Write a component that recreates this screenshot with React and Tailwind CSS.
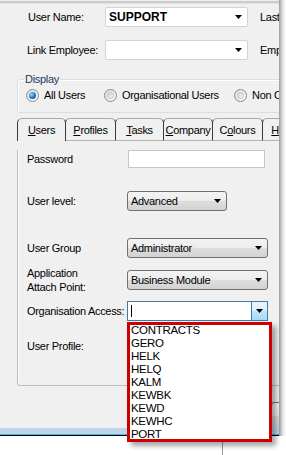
import React from 'react'

const font = "font-['Liberation_Sans',Arial,sans-serif]"

function Arrow() {
  return (
    <svg width="7" height="4" viewBox="0 0 7 4" className="shrink-0">
      <path d="M0 0h7L3.5 4z" fill="#000" />
    </svg>
  )
}

// white editable combo (top of dialog)
function EditCombo({ value, bold }) {
  return (
    <div className="flex h-[20px] w-[143px] shrink-0 items-center justify-between rounded-[2px] border border-[#d3d3d3] bg-white pl-[3px] pr-[5px]">
      <span className={bold ? 'text-[12px] font-bold tracking-normal' : ''}>{value}</span>
      <Arrow />
    </div>
  )
}

// win7 dropdown list look
function DropList({ value, w }) {
  return (
    <div className={`flex h-[20px] ${w} shrink-0 items-center justify-between rounded-[3px] border border-[#707070] bg-[linear-gradient(#f3f3f3,#ececec_50%,#dedede_50%,#d2d2d2)] pl-[3px] pr-[5px]`}>
      <span>{value}</span>
      <Arrow />
    </div>
  )
}

function Radio({ label, checked, w }) {
  return (
    <div className={`flex ${w} shrink-0 items-center gap-[5px]`}>
      <span className="flex h-[13px] w-[13px] items-center justify-center rounded-full border border-[#8a8a8a] bg-[linear-gradient(135deg,#dcdcdc,#fbfbfb)]">
        {checked ? (
          <span className="h-[7px] w-[7px] rounded-full bg-[radial-gradient(circle_at_35%_35%,#9ad8ff,#1d72c4_55%,#0c4786)]" />
        ) : (
          <span className="h-[7px] w-[7px] rounded-full border border-[#c4c4c4] bg-[linear-gradient(135deg,#d2d2d2,#f6f6f6)]" />
        )}
      </span>
      <span>{label}</span>
    </div>
  )
}

function Tab({ children, active, w, first }) {
  return (
    <div
      className={`flex h-[23px] ${w} shrink-0 items-center justify-center rounded-t-[5px] border-x border-t border-x-[#3a3a3a] border-t-[#a8a8a8] ${first ? '' : '-ml-px'} ${active ? 'relative z-10 bg-[#f0f0f0] pb-px' : 'border-b border-b-[#b4b4b4]'}`}
    >
      {children}
    </div>
  )
}

const items = ['CONTRACTS', 'GERO', 'HELK', 'HELQ', 'KALM', 'KEWBK', 'KEWD', 'KEWHC', 'PORT']

export default function App() {
  return (
    <div className={`relative h-[455px] w-[286px] overflow-hidden bg-white text-[11px] leading-[14px] tracking-[-0.3px] text-black ${font}`}>
      <div className="flex">
        {/* dialog window */}
        <div className="w-[279px] shrink-0">
          <div className="h-[4px] bg-[linear-gradient(#ffffff,#bdbdbd_50%,#f0f0f0)]" />
          <div className="h-[424px] overflow-hidden whitespace-nowrap bg-[#f0f0f0]">
            <div className="mt-[3px] flex h-[20px] items-center">
              <span className="w-[105px] shrink-0 pl-[28px]">User Name:</span>
              <EditCombo value="SUPPORT" bold />
              <span className="ml-[12px]">Last</span>
            </div>
            <div className="mt-[13px] flex h-[20px] items-center">
              <span className="w-[105px] shrink-0 pl-[27px]">Link Employee:</span>
              <EditCombo value="" />
              <span className="ml-[12px]">Emp</span>
            </div>

            {/* Display group */}
            <div className="ml-[17px] mt-[19px] h-[34px] w-[300px] rounded-[3px] border border-[#d5dfe5] shadow-[inset_1px_1px_0_#fff]">
              <span className="-mt-[8px] ml-[6px] block w-fit bg-[#f0f0f0] px-px text-[#1e395b]">Display</span>
              <div className="ml-[8px] mt-[2px] flex h-[14px] items-center">
                <Radio label="All Users" checked w="w-[78px]" />
                <Radio label="Organisational Users" w="w-[130px]" />
                <Radio label="Non Organisational Users" w="w-[160px]" />
              </div>
            </div>

            {/* tabs */}
            <div className="ml-[17px] mt-[5px] flex items-end">
              <Tab active first w="w-[49px]"><span><span className="underline">U</span>sers</span></Tab>
              <Tab w="w-[51px]"><span><span className="underline">P</span>rofiles</span></Tab>
              <Tab w="w-[49px]"><span><span className="underline">T</span>asks</span></Tab>
              <Tab w="w-[50px]"><span><span className="underline">C</span>ompany</span></Tab>
              <Tab w="w-[51px]"><span>C<span className="underline">o</span>lours</span></Tab>
              <Tab w="w-[40px]"><span><span className="underline">H</span>elp</span></Tab>
            </div>

            {/* tab page */}
            <div className="ml-[17px] h-[236px] w-[275px] rounded-bl-[3px] border-x border-b border-[#bcbcbc] pl-[9px] shadow-[inset_1px_0_0_#fff]">
              <div className="mt-[9px] flex h-[18px] items-center">
                <span className="w-[101px] shrink-0">Password</span>
                <div className="h-[18px] w-[137px] shrink-0 border border-[#c6c6c6] bg-white" />
              </div>
              <div className="mt-[23px] flex h-[20px] items-center">
                <span className="w-[100px] shrink-0">User level:</span>
                <DropList value="Advanced" w="w-[100px]" />
              </div>
              <div className="mt-[27px] flex h-[20px] items-center">
                <span className="w-[100px] shrink-0">User Group</span>
                <DropList value="Administrator" w="w-[141px]" />
              </div>
              <div className="mt-[12px] flex h-[20px] items-center">
                <span className="w-[100px] shrink-0">Application<br />Attach Point:</span>
                <DropList value="Business Module" w="w-[141px]" />
              </div>
              <div className="mt-[11px] flex h-[20px] items-center">
                <span className="w-[100px] shrink-0">Organisation Access:</span>
                <div className="flex h-[20px] w-[141px] shrink-0 items-center justify-between border border-[#3d7bad] bg-white pl-[3px]">
                  <span className="h-[12px] w-px bg-black" />
                  <span className="flex h-full w-[16px] items-center justify-center border-l border-[#3c7fb1] bg-[linear-gradient(#eaf6fd,#d9f0fc_50%,#bee6fd_50%,#a7d9f5)]">
                    <Arrow />
                  </span>
                </div>
              </div>
              <div className="mt-[15px] flex h-[20px] items-center">
                <span className="w-[100px] shrink-0">User Profile:</span>
              </div>
            </div>

            <div className="ml-[271px] mt-[16px] h-[28px] w-[40px] rounded-[3px] border border-[#707070] bg-[linear-gradient(#f3f3f3,#ebebeb_50%,#dddddd_50%,#cfcfcf)]" />
          </div>
          <div className="h-[6px] bg-[#bfd3ea]" />
          <div className="h-px bg-[#33c3e6]" />
          <div className="h-px bg-black" />
        </div>
        {/* window shadow */}
        <div className="h-[436px] w-[7px] bg-[linear-gradient(to_right,#9c9c9c,#e4e4e4_55%,#ffffff)]" />
      </div>
      <div className="ml-[222px] mt-[4px] h-[15px] w-px bg-[#9a9a9a]" />

      {/* open dropdown list, highlighted */}
      <div className="absolute left-[127px] top-[322px] h-[120px] w-[145px] border-[3px] border-[#cc0000] bg-white shadow-[4px_4px_5px_rgba(0,0,0,0.35)]">
        <div className="-mt-[1px] pl-px text-[11.5px] leading-[13px]">
          {items.map((it) => (
            <div key={it}>{it}</div>
          ))}
        </div>
      </div>
    </div>
  )
}
